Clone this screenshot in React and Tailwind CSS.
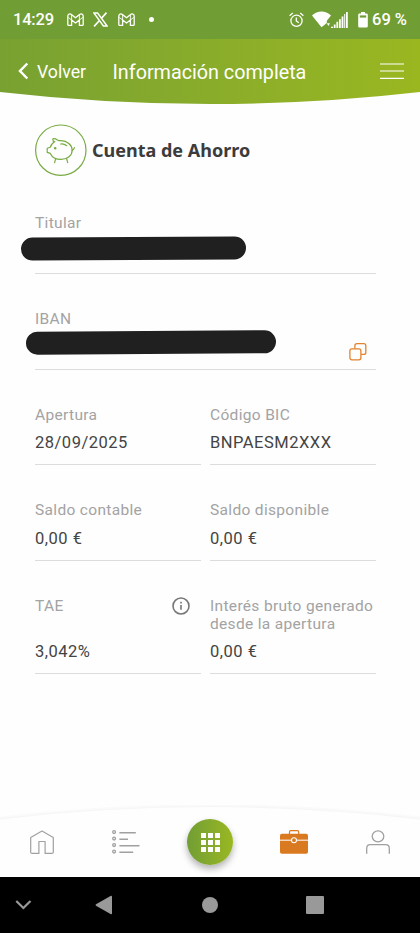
import clsx from 'clsx'

/* status bar icons */
const GmailIcon = ({ className }) => (
  <svg className={className} width="17" height="14" viewBox="0 0 17 14" fill="none" stroke="white" strokeWidth="1.3" strokeLinejoin="round">
    <path d="M.8 3.2C.8 1 3 .4 4.4 1.5L8.5 4.8L12.6 1.5C14 .4 16.2 1 16.2 3.2V11.4Q16.2 12.4 15.2 12.4H12.4V7L8.5 10L4.6 7V12.4H1.8Q.8 12.4 .8 11.4Z" />
    <path d="M4.6 7V2M12.4 7V2M1.2 4.4L4.6 7M15.8 4.4L12.4 7" strokeWidth=".9" />
  </svg>
)

const XIcon = ({ className }) => (
  <svg className={className} width="15" height="15" viewBox="0 0 15 15" fill="none" stroke="white">
    <path d="M.9 1H4.6L14.1 14H10.4Z" strokeWidth="1.4" />
    <path d="M13.5 .6L8.6 6.1M6.2 8.8L1.1 14.4" strokeWidth="1.6" />
  </svg>
)

const AlarmIcon = () => (
  <svg className="ml-[135px]" width="15" height="16" viewBox="0 0 15 16" fill="none" stroke="white" strokeWidth="1.3">
    <circle cx="7.5" cy="8.8" r="5.6" />
    <path d="M7.3 5.4V9L9.8 10.8M.6 3.7L3.8 1.1M14.4 3.7L11.2 1.1" />
  </svg>
)

const SignalIcon = () => (
  <svg className="ml-[8px]" width="37" height="18" viewBox="0 0 37 18" fill="white">
    <path d="M0 4.5C5.5-.8 13.5-.8 19 4.5L14.8 9.8V12L9.5 16.3Z" />
    <path d="M14.8 12.2H18L16.4 15Z" />
    <path d="M19 17V15.8H21V17ZM21.8 17V13.5H23.6V17ZM24.4 17V10.8H26.2V17ZM27 17V8.2H28.8V17ZM29.6 17V5.6H31.4V17ZM32.2 17V3H33.2V17ZM34 17V1H35.8V17Z" />
  </svg>
)

const BatteryIcon = () => (
  <svg className="ml-[9px]" width="10" height="16" viewBox="0 0 10 16">
    <path d="M3 0H7V1.6H8.5Q9.8 1.6 9.8 2.9V14.2Q9.8 15.5 8.5 15.5H1.5Q.2 15.5 .2 14.2V2.9Q.2 1.6 1.5 1.6H3Z" fill="white" />
    <path d="M1.8 3.4H8.2V5.6H1.8Z" fill="#719e34" />
  </svg>
)

/* app icons */
const PiggyIcon = () => (
  <svg width="52" height="52" viewBox="0 0 52 52" fill="none" stroke="#79ab43" strokeWidth="1.2" strokeLinecap="round" strokeLinejoin="round">
    <circle cx="25.8" cy="26.2" r="25.2" />
    <path d="M19.8 17.4C17.5 18.8 16 20.8 15.2 23.3L12.2 24.2V28.4L15.3 29.4C17 33.2 21 35.4 26 35.4C32.5 35.4 37.2 31.4 37.2 26.2C37.2 20.8 32 16.7 26 16.7C24.6 16.7 23.4 16.5 22.4 15.9C21 14.9 19.6 14.5 17.8 14.8L18.5 18.1" />
    <path d="M25.6 20C28.4 19.6 30 20.3 31.7 21.7M37 26.5C38.8 25.9 39 24.9 39.4 23.6M20.7 34.7L19.6 38.6M31.6 34.7L32.7 38.6" />
    <circle cx="20.2" cy="24.3" r=".7" fill="#79ab43" />
  </svg>
)

const CopyIcon = () => (
  <svg width="18" height="18" viewBox="0 0 18 18" fill="none" stroke="#e2832d" strokeWidth="1.3">
    <rect x=".9" y="5.8" width="11" height="11" rx="2" />
    <path d="M5.9 5.6V2.7Q5.9 .7 7.9 .7H14.8Q16.8 .7 16.8 2.7V9.4Q16.8 11.4 14.8 11.4H12.1" />
  </svg>
)

const InfoIcon = () => (
  <svg width="18" height="18" viewBox="0 0 18 18" fill="none" stroke="#777" strokeWidth="1.6">
    <circle cx="9" cy="9" r="8" />
    <path d="M9 8V12.8M9 4.7V6.4" />
  </svg>
)

const HomeIcon = () => (
  <svg width="24" height="24" viewBox="0 0 24 24" fill="none" stroke="#a0a0a0" strokeWidth="1.2" strokeLinejoin="round">
    <path d="M12 1.1L23.3 7.5V22.2Q23.3 23.4 21.9 23.4H15.1V11.5H8.9V23.4H2.1Q.7 23.4 .7 22.2V7.5Z" />
  </svg>
)

const ListIcon = () => (
  <svg width="28" height="24" viewBox="0 0 28 24" fill="none" stroke="#a0a0a0" strokeWidth="1.3">
    {[2.1, 8.6, 15.1, 21.6].map((cy) => (
      <circle key={cy} cx="2.1" cy={cy} r="1.4" />
    ))}
    <path d="M7.4 2.8H23.8M7.4 9.3H16M7.4 15.8H27.5M7.4 22.3H21.2" strokeWidth="1.4" />
  </svg>
)

const BriefcaseIcon = () => (
  <svg width="28" height="24" viewBox="0 0 28 24">
    <path d="M9.5 4V2Q9.5 .7 10.8 .7H17.4Q18.7 .7 18.7 2V4" fill="none" stroke="#da7a20" strokeWidth="1.2" />
    <rect y="3.8" width="28" height="20" rx="1.8" fill="#da7a20" />
    <path d="M0 10.2H11.5M16.5 10.2H28" stroke="#fff" strokeWidth="1" />
    <circle cx="14" cy="10.2" r="2.5" fill="#da7a20" stroke="#fff" strokeWidth="1.1" />
  </svg>
)

const UserIcon = () => (
  <svg width="24" height="24" viewBox="0 0 24 24" fill="none" stroke="#a0a0a0" strokeWidth="1.3">
    <ellipse cx="12" cy="6.3" rx="5.8" ry="5.5" />
    <path d="M.7 23.7V18.2Q.7 14.6 4.3 14.6H19.7Q23.3 14.6 23.3 18.2V23.7" />
  </svg>
)

const Field = ({ label, value, icon, className }) => (
  <div className={clsx('flex flex-col justify-between border-b border-[#dcdcdc] pb-[11.5px] pt-[37px]', className)}>
    <div className="flex items-start justify-between pr-[11px]">
      <span className="text-[15.5px] leading-[17.5px] tracking-[0.33px] text-[#a3a3a3]">{label}</span>
      {icon}
    </div>
    <span className="text-[16.5px] leading-[20px] tracking-[0.5px] text-[#444]">{value}</span>
  </div>
)

const StatusBar = () => (
  <div className="flex h-[39px] items-center bg-[#719e34] pl-[13px] text-[16.5px] font-medium text-white">
    <span className="w-[53.5px] pt-[2px] tracking-[-0.2px]">14:29</span>
    <GmailIcon />
    <XIcon className="ml-[9.5px]" />
    <GmailIcon className="ml-[10px]" />
    <span className="ml-[14px] size-[5px] rounded-full bg-white" />
    <AlarmIcon />
    <SignalIcon />
    <BatteryIcon />
    <span className="ml-[4px] whitespace-nowrap pt-[2px]">69 %</span>
  </div>
)

const Header = () => (
  <header className="flex h-[65px] items-start bg-gradient-to-r from-[#78a131] to-[#9ab720] text-white [clip-path:path('M0_0H420V53Q210_77_0_53Z')]">
    <svg className="ml-[18px] mt-[23px]" width="11" height="18" viewBox="0 0 11 18" fill="none" stroke="white" strokeWidth="2.5">
      <path d="M9.3 1.5L2 9L9.3 16.5" />
    </svg>
    <span className="ml-[8px] mt-[21px] w-[75.5px] text-[17.7px] leading-[24px]">Volver</span>
    <h1 className="mt-[22px] w-[267.5px] text-[19.75px] leading-[24px]">Información completa</h1>
    <svg className="mt-[23px]" width="24" height="18" viewBox="0 0 24 18" stroke="white" strokeWidth="1.2">
      <path d="M0 2H24M0 9H24M0 16.3H24" />
    </svg>
  </header>
)

const BottomNav = () => (
  <nav className="relative h-[72px]">
    <svg className="absolute inset-0" width="420" height="16" viewBox="0 0 420 16" fill="none">
      <path d="M0 12.8Q210-11.7 420 12.8" stroke="#fafafa" strokeWidth="2.5" />
      <path d="M0 13.8Q210-10.8 420 13.8" stroke="#f6f6f6" strokeWidth="1.2" />
    </svg>
    <div className="relative grid h-full grid-cols-5 place-items-center pt-[2px]">
      <HomeIcon />
      <ListIcon />
      <div className="grid size-[46.5px] place-items-center rounded-full bg-gradient-to-r from-[#719e34] to-[#9ab720] shadow-[0_4px_7px_rgba(0,0,0,0.3)]">
        <div className="grid grid-cols-3 gap-[2px]">
          {Array.from({ length: 9 }, (_, i) => (
            <span key={i} className="size-[5px] bg-white" />
          ))}
        </div>
      </div>
      <BriefcaseIcon />
      <UserIcon />
    </div>
  </nav>
)

const SystemBar = () => (
  <div className="flex h-[56px] items-center bg-black">
    <svg className="ml-[15px]" width="17" height="12" viewBox="0 0 17 12" fill="none" stroke="#999" strokeWidth="2.2">
      <path d="M1.3 2L8.4 9L15.5 2" />
    </svg>
    <svg className="ml-[63px]" width="18" height="20" viewBox="0 0 18 20" fill="#999">
      <path d="M1 9.2L15.5 .9Q17 .2 17 1.7V18.2Q17 19.6 15.5 18.9L1 10.8Q0 10 1 9.2Z" />
    </svg>
    <span className="ml-[88.5px] size-[16.5px] rounded-full bg-[#999]" />
    <span className="ml-[88px] size-[18px] rounded-[1px] bg-[#999]" />
  </div>
)

const App = () => (
  <div className="flex h-[933px] w-[420px] flex-col overflow-hidden bg-[#fefefe] font-['Roboto',sans-serif]">
    <StatusBar />
    <Header />

    <main className="flex-1 pl-[35px] pr-[44px] pt-[20px]">
      <div className="flex items-center gap-[5px]">
        <PiggyIcon />
        <h2 className="whitespace-nowrap font-['Noto_Sans',sans-serif] text-[18px] font-bold text-[#3c3c3c]">
          Cuenta de Ahorro
        </h2>
      </div>

      <div className="grid grid-cols-2 gap-x-[9px] pt-[2px]">
        <Field
          label="Titular"
          className="col-span-2 h-[96px]"
          value={<span className="-ml-[14px] mb-[2.5px] block h-[22.5px] w-[225px] -rotate-[0.3deg] rounded-full bg-[#202020]" />}
        />
        <Field
          label="IBAN"
          className="col-span-2 h-[96px]"
          value={
            <span className="flex items-start justify-between pr-[9px]">
              <span className="-ml-[9px] mb-[4.5px] block h-[22.5px] w-[250px] -rotate-[0.35deg] rounded-full bg-[#202020]" />
              <span className="-mb-[4px] mt-[12px]">
                <CopyIcon />
              </span>
            </span>
          }
        />
        <Field label="Apertura" value="28/09/2025" className="h-[95px]" />
        <Field label="Código BIC" value="BNPAESM2XXX" className="h-[95px]" />
        <Field label="Saldo contable" value="0,00 €" className="h-[96px]" />
        <Field label="Saldo disponible" value="0,00 €" className="h-[96px]" />
        <Field label="TAE" value="3,042%" icon={<span className="-mt-[1px]"><InfoIcon /></span>} className="h-[113px]" />
        <Field
          label={<span className="-mr-[11px] block whitespace-nowrap">Interés bruto generado<br />desde la apertura</span>}
          value="0,00 €"
          className="h-[113px]"
        />
      </div>
    </main>

    <BottomNav />
    <SystemBar />
  </div>
)

export default App
